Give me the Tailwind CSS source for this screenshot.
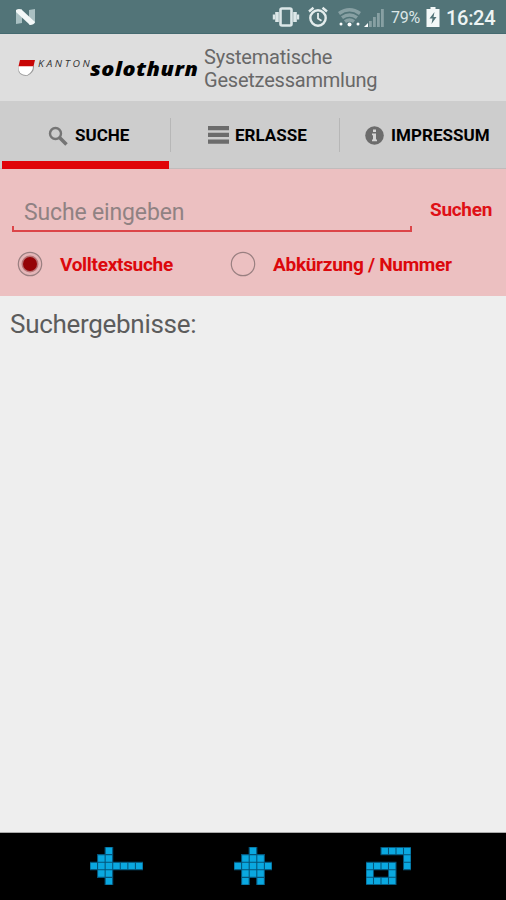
<!DOCTYPE html>
<html lang="de">
<head>
<meta charset="utf-8">
<title>Systematische Gesetzessammlung</title>
<script src="https://cdn.jsdelivr.net/npm/@tailwindcss/browser@4"></script>
</head>
<body class="w-[506px] h-[900px] overflow-hidden bg-[#eeeeee] font-[Roboto,sans-serif] flex flex-col">
<header class="h-[34px] shrink-0 bg-[#527478] border-b border-[#456a70] flex items-center text-[#eef4f4]">
  <svg class="ml-[15px]" width="22" height="18" viewBox="0 0 22 18"><path d="M1 3l6-2v14l-6 1z" fill="#a9c0c2"/><path d="M14 2l6-1v14l-6 2z" fill="#a9c0c2"/><path d="M1 2q3-2 6 0l13 12q-1 3-5 3L1 4z" fill="#f3f8f8"/></svg>
  <div class="ml-auto flex items-center">
    <svg width="28" height="22" viewBox="0 0 28 22" fill="none" stroke="#dce7e8"><rect x="8.500" y="2.500" width="11" height="17" rx="1.500" stroke-width="2.600"/><path d="M5 6v10M23 6v10" stroke-width="3.600"/><path d="M1.900 8.500v5M26.100 8.500v5" stroke-width="2.200"/></svg>
    <svg class="ml-[7px]" width="22" height="22" viewBox="0 0 22 22" fill="none" stroke="#e4eded"><circle cx="11" cy="12" r="7.700" stroke-width="2.400"/><path d="M2 5.500l4.500-3.700M20 5.500l-4.500-3.700" stroke-width="2.400"/><path d="M11 7v5.500l3.500 2.300" stroke-width="1.800"/></svg>
    <svg class="ml-[9px] mt-[2px]" width="23" height="20" viewBox="0 0 23 20" fill="none"><path d="M1 5.500q10.500-7.500 21 0" stroke="#87a0a3" stroke-width="3.400"/><path d="M4 9.700q7.500-5.500 15 0M7 13.700q4.500-3.500 9 0" stroke="#87a0a3" stroke-width="3.400"/><g fill="#fff"><circle cx="3" cy="16" r="1.500"/><circle cx="11.500" cy="16.500" r="2"/><circle cx="20" cy="16" r="1.500"/></g></svg>
    <svg class="ml-[3px] mt-[2px]" width="21" height="20" viewBox="0 0 21 20" fill="#87a0a3"><path d="M5 13h2.800v6H5zM9 9h2.800v10H9zM13 5h2.800v14H13zM17 1h2.800v18H17z"/><path d="M0 19l4-4v4z" fill="#fff"/></svg>
    <span class="ml-[6px] w-[31px] text-[16px] leading-5 tracking-[-0.2px] mt-[2px] text-[#dbe6e7] whitespace-nowrap">79%</span>
    <svg class="ml-[4px]" width="14" height="22" viewBox="0 0 14 22"><path d="M4.500 1h5v2H13.500v18H.5V3h4z" fill="#f3f8f8"/><path d="M8.500 6L3.500 12.500h3L5.500 18l5-7h-3z" fill="#527478"/></svg>
    <span class="ml-[6px] w-[60px] text-[20px] leading-5 font-medium tracking-[-0.3px] mt-[3px]">16:24</span>
  </div>
</header>
<section class="h-[67px] shrink-0 bg-[#dedede] flex items-start pl-[17px]">
  <svg class="mt-[25px]" width="18" height="18" viewBox="0 0 18 18"><path d="M1.500 7H17q.5 7-7 10Q-.5 17 1.500 7z" fill="#999"/><path d="M1.500 7H16q0 6-6 9.200Q.5 16 1.500 7z" fill="#fff"/><path d="M3 1h15l-1.500 6.200H1.500z" fill="#c80505"/></svg>
  <span class="mt-[24px] ml-[3px] w-[52px] text-[9.500px] leading-3 italic tracking-[2.400px] origin-left scale-x-[1.09] text-[#333] font-['Open_Sans'] whitespace-nowrap">KANTON</span>
  <span class="mt-[23px] w-[114px] text-[19.500px] leading-6 italic font-extrabold tracking-[0.500px] origin-left scale-x-[1.105] text-black font-['Open_Sans'] whitespace-nowrap">solothurn</span>
  <h1 class="mt-[12px] text-[20px] leading-[23px] text-[#686868] tracking-[-0.22px]">Systematische<br>Gesetzessammlung</h1>
</section>
<nav class="h-[68px] shrink-0 bg-[#cdcdcd] border-b border-[#c0bcbc] flex text-[17px] font-bold text-black">
  <div class="w-[170px] relative flex items-center pl-[48px] whitespace-nowrap">
    <svg class="mt-[2px]" width="20" height="20" viewBox="0 0 20 20" fill="none" stroke="#757575"><circle cx="7.500" cy="7.500" r="5.500" stroke-width="2.400"/><path d="M11.500 11.500l7 7" stroke-width="3.500"/></svg>
    <span class="ml-[7px] mt-[3px]">SUCHE</span>
    <div class="absolute left-[2px] bottom-[-1px] w-[167px] h-[8px] bg-[#e00408]"></div>
  </div>
  <div class="w-[169px] flex items-center pl-[38px] whitespace-nowrap relative">
    <i class="absolute left-0 top-[17px] h-[34px] w-px bg-[#b7b7b7]"></i>
    <svg class="mt-[1px]" width="21" height="18" viewBox="0 0 21 18" fill="#6c6c6c"><path d="M0 0h21v4.300H0zM0 6.800h21v4.300H0zM0 13.500h21v4.300H0z"/></svg>
    <span class="ml-[6px] mt-[3px]">ERLASSE</span>
  </div>
  <div class="w-[167px] flex items-center pl-[26px] whitespace-nowrap relative">
    <i class="absolute left-0 top-[17px] h-[34px] w-px bg-[#b7b7b7]"></i>
    <svg class="mt-[2px]" width="19" height="19" viewBox="0 0 19 19"><circle cx="9.500" cy="9.500" r="9.300" fill="#6c6c6c"/><path d="M8 3.500h3v2.500H8zM7 7.500h4v6h1v1.800H7v-1.800h1V9.200H7z" fill="#d5d5d5"/></svg>
    <span class="ml-[7px] mt-[3px] tracking-[0.05px]">IMPRESSUM</span>
  </div>
</nav>
<section class="h-[127px] shrink-0 bg-[#ecc0c1] flex flex-col">
  <div class="flex h-[63px] pl-[12px]">
    <div class="w-[400px] h-[63px] flex flex-col justify-end">
      <span class="pl-[12px] text-[23px] leading-[27px] tracking-[-0.15px] text-[#908283] whitespace-nowrap">Suche eingeben</span>
      <div class="h-[6px] border-2 border-t-0 border-[#dc4549]"></div>
    </div>
    <span class="ml-[18px] mt-[30px] text-[19px] leading-[22px] font-bold tracking-[-0.3px] text-[#df1016]">Suchen</span>
  </div>
  <div class="flex items-center h-[64px] pl-[17px] text-[19px] font-bold text-[#dc080c] whitespace-nowrap">
    <svg width="26" height="26" viewBox="0 0 26 26"><circle cx="13" cy="13" r="11.700" fill="#e4b6b8" stroke="#997f80" stroke-width="1.200"/><circle cx="13" cy="13" r="8.500" fill="#b87476"/><circle cx="13" cy="13" r="7" fill="#950307"/></svg>
    <span class="ml-[17px] mt-[2px] w-[170px] tracking-[-0.3px]">Volltextsuche</span>
    <svg width="26" height="26" viewBox="0 0 26 26"><circle cx="13" cy="13" r="11.700" fill="none" stroke="#997f80" stroke-width="1.200"/></svg>
    <span class="ml-[17px] mt-[2px] tracking-[-0.28px]">Abkürzung / Nummer</span>
  </div>
</section>
<main class="flex-1 bg-[#eeeeee] pl-[10px] pt-[12px] border-b border-[#aaa]">
  <h2 class="text-[26px] leading-[32px] tracking-[-0.3px] text-[#5c5c5c] whitespace-nowrap">Suchergebnisse:</h2>
</main>
<footer class="h-[67px] shrink-0 bg-black flex items-start pt-[14px] pl-[90px]">
  <svg width="53" height="38" viewBox="0 0 7 5" fill="#0aa8e0" stroke="#04547a" stroke-width=".14"><path d="M2 0h1v1h-1zM1 1h1v1h-1zM2 1h1v1h-1zM0 2h1v1h-1zM1 2h1v1h-1zM2 2h1v1h-1zM3 2h1v1h-1zM4 2h1v1h-1zM5 2h1v1h-1zM6 2h1v1h-1zM1 3h1v1h-1zM2 3h1v1h-1zM2 4h1v1h-1z"/></svg>
  <svg class="ml-[91px]" width="38" height="38" viewBox="0 0 5 5" fill="#0aa8e0" stroke="#04547a" stroke-width=".14"><path d="M2 0h1v1h-1zM1 1h1v1h-1zM2 1h1v1h-1zM3 1h1v1h-1zM0 2h1v1h-1zM1 2h1v1h-1zM2 2h1v1h-1zM3 2h1v1h-1zM4 2h1v1h-1zM1 3h1v1h-1zM2 3h1v1h-1zM3 3h1v1h-1zM1 4h1v1h-1zM3 4h1v1h-1z"/></svg>
  <svg class="ml-[94px]" width="45" height="38" viewBox="0 0 6 5" fill="#0aa8e0" stroke="#04547a" stroke-width=".14"><path d="M2 0h1v1h-1zM3 0h1v1h-1zM4 0h1v1h-1zM5 0h1v1h-1zM5 1h1v1h-1zM5 2h1v1h-1zM0 2h1v1h-1zM1 2h1v1h-1zM2 2h1v1h-1zM3 2h1v1h-1zM0 3h1v1h-1zM3 3h1v1h-1zM0 4h1v1h-1zM1 4h1v1h-1zM2 4h1v1h-1zM3 4h1v1h-1z"/></svg>
</footer>
</body>
</html>
